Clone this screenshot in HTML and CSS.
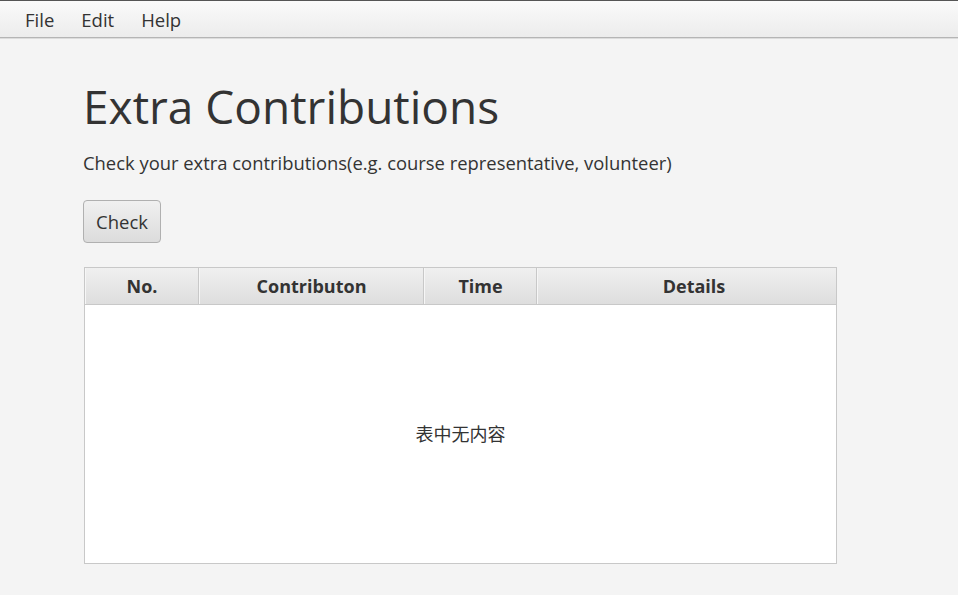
FILE: index.html
```html
<!DOCTYPE html>
<html>
<head>
<meta charset="utf-8">
<link rel="stylesheet" href="styles.css">
</head>
<body>
<div class="menubar">
  <span class="menu">File</span>
  <span class="menu">Edit</span>
  <span class="menu">Help</span>
</div>
<main class="content">
  <h1 class="title">Extra Contributions</h1>
  <p class="subtitle">Check your extra contributions(e.g. course representative, volunteer)</p>
  <button class="btn">Check</button>
  <div class="table">
    <div class="thead">
      <div class="th c1">No.</div>
      <div class="th c2">Contributon</div>
      <div class="th c3">Time</div>
      <div class="th c4">Details</div>
    </div>
    <div class="tbody">
      <span class="empty">表中无内容</span>
    </div>
  </div>
</main>
</body>
</html>
```
FILE: styles.css
```css
html, body {
  margin: 0;
  padding: 0;
  background: #f4f4f4;
  font-family: "Open Sans", "Noto Sans CJK SC", sans-serif;
  color: #333;
}
.menubar {
  height: 38px;
  box-sizing: border-box;
  border-top: 1px solid #555;
  border-bottom: 1px solid #b5b5b5;
  background: linear-gradient(#fafafa, #ececec);
  display: flex;
  align-items: center;
  padding-left: 15px;
  box-shadow: 0 1px 0 #dcdcdc;
}
.menu {
  font-size: 18.5px;
  padding: 0 10px;
  margin-right: 7px;
  color: #333;
}
.content {
  padding-left: 83px;
  padding-top: 39px;
}
.title {
  margin: 0;
  font-weight: 400;
  font-size: 46px;
  line-height: 58px;
  color: #333;
}
.subtitle {
  margin: 16px 0 0 0;
  font-size: 18.4px;
  line-height: 24px;
}
.btn {
  margin-top: 25px;
  width: 78px;
  height: 43px;
  border: 1px solid #b0b0b0;
  border-radius: 4px;
  background: linear-gradient(#f0f0f0, #dcdcdc);
  font-family: inherit;
  font-size: 18.5px;
  color: #333;
  padding: 0;
  display: block;
}
.table {
  margin-top: 24px;
  margin-left: 1px;
  width: 753px;
  height: 297px;
  box-sizing: border-box;
  border: 1px solid #c8c8c8;
  display: flex;
  flex-direction: column;
  background: #fff;
}
.thead {
  display: flex;
  height: 37px;
  box-sizing: border-box;
  border-bottom: 1px solid #c8c8c8;
  background: linear-gradient(#f0f0f0, #dedede);
}
.th {
  box-sizing: border-box;
  border-right: 1px solid #c8c8c8;
  border-left: 1px solid #f6f6f6;
  display: flex;
  align-items: center;
  justify-content: center;
  font-weight: 700;
  font-size: 18px;
  color: #333;
}
.c1 { width: 114px; }
.c2 { width: 225px; }
.c3 { width: 113px; }
.c4 { flex: 1; border-right: none; padding-left: 14px; }
.tbody {
  flex: 1;
  display: flex;
  align-items: center;
  justify-content: center;
}
.empty {
  font-size: 18px;
  color: #333;
  margin-top: -2px;
}
```
